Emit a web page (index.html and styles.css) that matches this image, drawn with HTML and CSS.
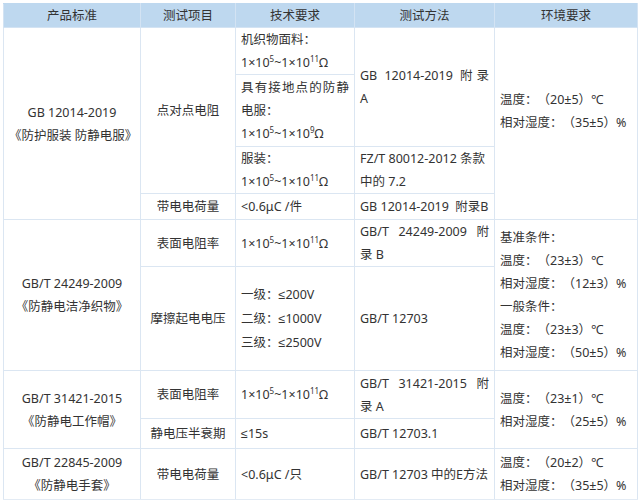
FILE: index.html
```html
<!DOCTYPE html>
<html lang="zh-CN">
<head>
<meta charset="utf-8">
<title>防静电标准</title>
<link rel="stylesheet" href="styles.css">
</head>
<body>
<table class="spec">
  <colgroup>
    <col class="w1"><col class="w2"><col class="w3"><col class="w4"><col class="w5">
  </colgroup>
  <thead>
    <tr class="h23">
      <th>产品标准</th><th>测试项目</th><th>技术要求</th><th>测试方法</th><th>环境要求</th>
    </tr>
  </thead>
  <tbody>
    <tr class="h47 first">
      <td rowspan="4" class="c">GB 12014-2019<br>《防护服装 防静电服》</td>
      <td rowspan="3" class="c">点对点电阻</td>
      <td class="l">机织物面料：<br>1×10<sup>5</sup>~1×10<sup>11</sup>Ω</td>
      <td rowspan="2" class="l"><span class="jl">GB 12014-2019 附录</span>A</td>
      <td rowspan="4" class="l up">温度：（20±5）℃<br>相对湿度：（35±5）%</td>
    </tr>
    <tr class="h72">
      <td class="l"><span class="jl">具有接地点的防静</span>电服：<br>1×10<sup>5</sup>~1×10<sup>9</sup>Ω</td>
    </tr>
    <tr class="h47">
      <td class="l">服装：<br>1×10<sup>5</sup>~1×10<sup>11</sup>Ω</td>
      <td class="l">FZ/T 80012-2012 条款<br>中的 7.2</td>
    </tr>
    <tr class="h26">
      <td class="c">带电电荷量</td>
      <td class="l">&lt;0.6μC /件</td>
      <td class="l">GB 12014-2019&nbsp; 附录B</td>
    </tr>

    <tr class="h47 first">
      <td rowspan="2" class="c">GB/T 24249-2009<br>《防静电洁净织物》</td>
      <td class="c">表面电阻率</td>
      <td class="l">1×10<sup>5</sup>~1×10<sup>11</sup>Ω</td>
      <td class="l"><span class="jl">GB/T 24249-2009 附</span>录 B</td>
      <td rowspan="2" class="l">基准条件：<br>温度：（23±3）℃<br>相对湿度：（12±3）%<br>一般条件：<br>温度：（23±3）℃<br>相对湿度：（50±5）%</td>
    </tr>
    <tr class="h104">
      <td class="c">摩擦起电电压</td>
      <td class="l">一级：<span class="le">≤</span>200V<br>二级：<span class="le">≤</span>1000V<br>三级：<span class="le">≤</span>2500V</td>
      <td class="l">GB/T 12703</td>
    </tr>

    <tr class="h48 first">
      <td rowspan="2" class="c">GB/T 31421-2015<br>《防静电工作帽》</td>
      <td class="c">表面电阻率</td>
      <td class="l">1×10<sup>5</sup>~1×10<sup>11</sup>Ω</td>
      <td class="l"><span class="jl">GB/T 31421-2015 附</span>录 A</td>
      <td rowspan="2" class="l">温度：（23±1）℃<br>相对湿度：（25±5）%</td>
    </tr>
    <tr class="h30">
      <td class="c">静电压半衰期</td>
      <td class="l"><span class="le">≤</span>15s</td>
      <td class="l">GB/T 12703.1</td>
    </tr>

    <tr class="h51 first last">
      <td class="c">GB/T 22845-2009<br>《防静电手套》</td>
      <td class="c">带电电荷量</td>
      <td class="l">&lt;0.6μC /只</td>
      <td class="l tight">GB/T 12703 中的E方法</td>
      <td class="l">温度：（20±2）℃<br>相对湿度：（35±5）%</td>
    </tr>
  </tbody>
</table>
</body>
</html>
```
FILE: styles.css
```css
body {
  margin: 0;
  background: #ffffff;
  font-family: "Noto Sans", "Noto Sans CJK SC", sans-serif;
  font-size: 12.5px;
  color: #333333;
  text-spacing-trim: space-all;
}

.spec {
  margin: 3px 0 0 3px;
  border-collapse: collapse;
  table-layout: fixed;
  width: 634px;
}

.w1 { width: 137px; }
.w2 { width: 95px; }
.w3 { width: 119px; }
.w4 { width: 140px; }
.w5 { width: 143px; }

.spec th,
.spec td {
  border: 1px solid #dbe6f2;
  padding: 0 5px;
  line-height: 23px;
  font-weight: normal;
  vertical-align: middle;
  white-space: nowrap;
  text-spacing-trim: space-all;
}

.spec th {
  background: #bed8ef;
  border-color: #d3e3f3;
  border-top-color: #bed8ef;
  text-align: center;
  color: #333333;
}

.spec tr.first > td {
  border-top-color: #b9cfe6;
}

.spec tr.last > td {
  border-bottom-color: #e3ebf4;
}

.c { text-align: center; }
.l { text-align: left; }

.spec td.up {
  vertical-align: top;
  padding-top: 60px;
}

.spec td.tight {
  padding-right: 0;
}

.jl {
  display: block;
  text-align: justify;
  text-align-last: justify;
}

.le {
  font-family: "Liberation Sans", sans-serif;
}

sup {
  font-size: 8px;
  line-height: 0;
  vertical-align: 5px;
}

.h23 { height: 23px; }
.h26 { height: 26px; }
.h30 { height: 30px; }
.h47 { height: 47px; }
.h48 { height: 48px; }
.h51 { height: 51px; }
.h72 { height: 72px; }
.h104 { height: 104px; }
```
